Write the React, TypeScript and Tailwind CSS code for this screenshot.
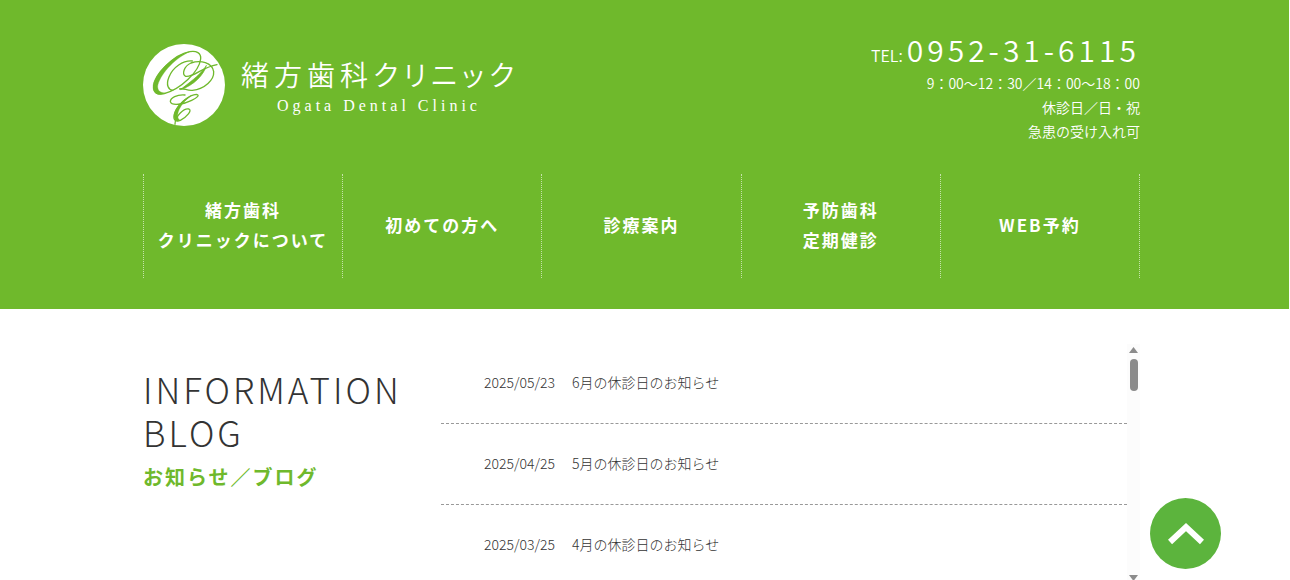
const navItems = [
  { href: '#about', lines: ['緒方歯科', 'クリニックについて'] },
  { href: '#first', lines: ['初めての方へ'] },
  { href: '#treatment', lines: ['診療案内'] },
  { href: '#prevention', lines: ['予防歯科', '定期健診'] },
  { href: '#reserve', lines: ['WEB予約'] },
]

const posts = [
  { date: '2025/05/23', title: '6月の休診日のお知らせ' },
  { date: '2025/04/25', title: '5月の休診日のお知らせ' },
  { date: '2025/03/25', title: '4月の休診日のお知らせ' },
]

function LogoMark() {
  return (
    <svg className="w-[82px] h-[82px] shrink-0" viewBox="2 1 246 246" fill="none" aria-hidden="true">
      <circle cx="125" cy="124" r="123" fill="#fff" />
      <g stroke="#6fb92c" strokeWidth="4" strokeLinecap="round" strokeLinejoin="round">
        {/* O */}
        <path d="M150 52 C122 50 92 70 80 100 C70 124 78 138 92 140 M175 46 C177 28 162 20 142 24 C96 32 36 92 34 130 C34 148 46 154 66 150 C116 136 170 84 175 46" />
        <path d="M142 24 C92 34 30 94 32 132 C34 154 54 156 70 148 C54 148 46 142 46 128 C50 98 92 46 142 24 Z" fill="#6fb92c" strokeWidth="1" />
        {/* D */}
        <path d="M112 136 C124 132 134 142 150 140 C188 136 216 108 214 84 C210 56 174 48 146 58 C124 68 118 92 130 98 C154 102 176 72 224 63" />
        <path d="M192 66 C186 92 154 126 114 138 C140 118 170 96 186 74 Z" fill="#6fb92c" strokeWidth="2" />
        {/* C */}
        <path d="M128 154 C104 152 84 162 84 174 C88 188 124 182 148 170 C164 162 174 154 162 152 C142 152 106 184 98 206 C90 228 98 236 114 230 C134 220 150 200 140 196 C126 192 98 216 98 242" />
        <path d="M146 156 C124 164 98 192 95 214 C94 232 104 234 114 230 C106 226 104 216 108 204 C114 186 128 170 146 156 Z" fill="#6fb92c" strokeWidth="1" />
      </g>
    </svg>
  )
}

function Header() {
  return (
    <header className="bg-[#6fb92c] text-white mr-px pr-[6px] pt-[29px] pb-[31px]">
      <div className="max-w-[997px] mx-auto">
        <div className="flex justify-between h-[145px]">
          <a href="#top" className="flex items-start gap-4 pt-[15px]">
            <LogoMark />
            <div className="pt-[10px]">
              <p className="text-[28px] leading-10 tracking-[5px] font-[350] [font-feature-settings:'palt']">
                緒方歯科クリニック
              </p>
              <p className="pl-9 text-base leading-6 tracking-[4px] font-['Liberation_Serif',serif]">
                Ogata Dental Clinic
              </p>
            </div>
          </a>
          <div className="text-right text-sm leading-6 font-[350]">
            <p className="flex items-baseline justify-end gap-1 h-[42px] leading-[41px]">
              <span className="text-base">TEL:</span>
              <a href="tel:0952-31-6115" className="text-[30px] tracking-[4px]">0952-31-6115</a>
            </p>
            <p>9：00〜12：30／14：00〜18：00</p>
            <p>休診日／日・祝</p>
            <p>急患の受け入れ可</p>
          </div>
        </div>

        <nav className="grid grid-cols-5 h-[104px] border-l border-dotted border-white/60">
          {navItems.map((item) => (
            <a
              key={item.href}
              href={item.href}
              className="flex flex-col items-center justify-center pb-[2px] border-r border-dotted border-white/60 text-[17px] leading-[30px] tracking-[2px] font-bold whitespace-nowrap"
            >
              {item.lines.map((line) => (
                <span key={line}>{line}</span>
              ))}
            </a>
          ))}
        </nav>
      </div>
    </header>
  )
}

function Information() {
  return (
    <section className="pr-[7px]">
      <div className="max-w-[997px] mx-auto flex pt-[34px]">
        <div className="w-[298px] shrink-0 pt-6">
          <h2 className="text-[35px] leading-[43px] tracking-[3px] font-light text-[#333]">
            INFORMATION
            <br />
            BLOG
          </h2>
          <p className="pt-1 text-xl leading-10 tracking-[2px] font-bold text-[#6fb92c]">お知らせ／ブログ</p>
        </div>

        <ul className="flex-1">
          {posts.map((post) => (
            <li key={post.date} className="border-b border-dashed border-[#999] pt-[27px] pb-[29px] pl-[43px]">
              <a href="#post" className="flex gap-[17px] text-sm leading-6 font-light text-[#333]">
                <time>{post.date}</time>
                <span>{post.title}</span>
              </a>
            </li>
          ))}
        </ul>

        {/* Scrollbar */}
        <div className="w-[13px] h-[240px] mt-px flex flex-col items-center bg-[#fcfcfc] py-[3px]">
          <svg className="w-[9px] h-[6px]" viewBox="0 0 9 6" fill="#8b8b8b">
            <path d="M4.5 0 L9 6 H0 Z" />
          </svg>
          <div className="w-2 h-8 mt-[6px] rounded-full bg-[#8b8b8b]" />
          <svg className="w-[9px] h-[6px] mt-auto" viewBox="0 0 9 6" fill="#8b8b8b">
            <path d="M0 0 H9 L4.5 6 Z" />
          </svg>
        </div>
      </div>
    </section>
  )
}

export default function App() {
  return (
    <div
      id="top"
      className="h-screen overflow-hidden bg-white font-['Noto_Sans_CJK_JP',sans-serif]"
    >
      <Header />
      <Information />

      <button
        type="button"
        aria-label="ページの先頭へ"
        className="fixed right-[69px] bottom-[11px] size-[71px] rounded-full bg-[#5cb43d] flex items-center justify-center"
      >
        <svg className="w-9 h-6" viewBox="0 0 36 24" fill="none" stroke="#fff" strokeWidth="6">
          <path d="M2 20 L18 5 L34 20" />
        </svg>
      </button>
    </div>
  )
}
